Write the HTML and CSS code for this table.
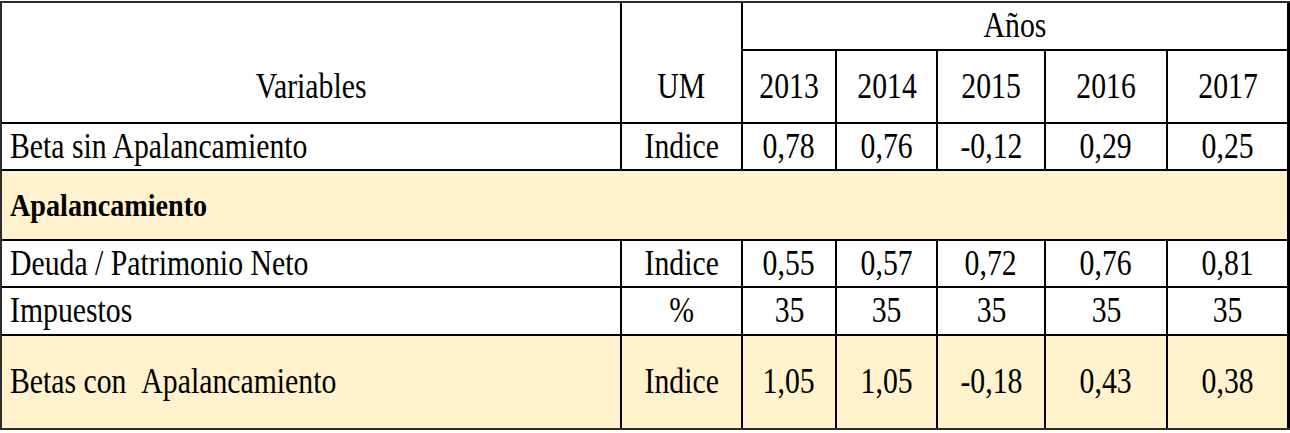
FILE: index.html
```html
<!DOCTYPE html>
<html lang="es">
  <head>
    <meta charset="UTF-8" />
    <title>Betas con Apalancamiento</title>
    <link rel="stylesheet" href="styles.css">
  </head>
  <body>
    <div class="beta-grid">
      <!-- cabecera -->
      <div class="cell head-fixed head-var"><span class="t">Variables</span></div>
      <div class="cell head-fixed head-um"><span class="t">UM</span></div>
      <div class="cell head-years"><span class="t">Años</span></div>
      <div class="cell"><span class="t">2013</span></div>
      <div class="cell"><span class="t">2014</span></div>
      <div class="cell"><span class="t">2015</span></div>
      <div class="cell"><span class="t">2016</span></div>
      <div class="cell"><span class="t">2017</span></div>

      <div class="cell name"><span class="t">Beta sin Apalancamiento</span></div>
      <div class="cell"><span class="t">Indice</span></div>
      <div class="cell"><span class="t">0,78</span></div>
      <div class="cell"><span class="t">0,76</span></div>
      <div class="cell"><span class="t">-0,12</span></div>
      <div class="cell"><span class="t">0,29</span></div>
      <div class="cell"><span class="t">0,25</span></div>

      <div class="cell name section hl"><span class="t">Apalancamiento</span></div>

      <div class="cell name"><span class="t">Deuda / Patrimonio Neto</span></div>
      <div class="cell"><span class="t">Indice</span></div>
      <div class="cell"><span class="t">0,55</span></div>
      <div class="cell"><span class="t">0,57</span></div>
      <div class="cell"><span class="t">0,72</span></div>
      <div class="cell"><span class="t">0,76</span></div>
      <div class="cell"><span class="t">0,81</span></div>

      <div class="cell name"><span class="t">Impuestos</span></div>
      <div class="cell"><span class="t">%</span></div>
      <div class="cell"><span class="t">35</span></div>
      <div class="cell"><span class="t">35</span></div>
      <div class="cell"><span class="t">35</span></div>
      <div class="cell"><span class="t">35</span></div>
      <div class="cell"><span class="t">35</span></div>

      <div class="cell name hl"><span class="t">Betas con &nbsp;Apalancamiento</span></div>
      <div class="cell hl"><span class="t">Indice</span></div>
      <div class="cell hl"><span class="t">1,05</span></div>
      <div class="cell hl"><span class="t">1,05</span></div>
      <div class="cell hl"><span class="t">-0,18</span></div>
      <div class="cell hl"><span class="t">0,43</span></div>
      <div class="cell hl"><span class="t">0,38</span></div>
    </div>
  </body>
</html>
```

FILE: styles.css
```css
body {
  margin: 0;
  background: #ffffff;
  color: #000000;
  font-family: "Liberation Serif", "Times New Roman", serif;
}

/* las lineas de la tabla son el fondo negro que asoma por el gap */
.beta-grid {
  display: grid;
  grid-template-columns: 618px 119px 92px 99px 106px 120px 119px;
  grid-template-rows: 46px 71px 45px 68px 45px 46px 92px;
  gap: 2px;
  width: 1289px;
  margin-top: 1px;
  border: 2px solid #2b2b2b;
  background: #000000;
}

.cell {
  display: flex;
  align-items: center;
  justify-content: center;
  padding: 0 6px;
  background: #ffffff;
  font-family: "Liberation Serif", "Times New Roman", serif;
  font-size: 35px;
  line-height: 40px;
  white-space: nowrap;
  overflow: hidden;
}

.hl {
  background: #fff2cc;
}

/* texto comprimido como en la hoja de calculo */
.t {
  display: inline-block;
  transform: scaleX(0.85);
  transform-origin: center center;
}

.name {
  justify-content: flex-start;
  padding-left: 8px;
}

.name .t {
  transform-origin: left center;
}

.head-fixed {
  grid-row: span 2;
  align-items: flex-end;
  padding-bottom: 15px;
}

.head-years {
  grid-column: span 5;
}

.section {
  grid-column: span 7;
  font-weight: bold;
  font-size: 32px;
}

.section .t {
  transform: scaleX(0.88);
}
```
